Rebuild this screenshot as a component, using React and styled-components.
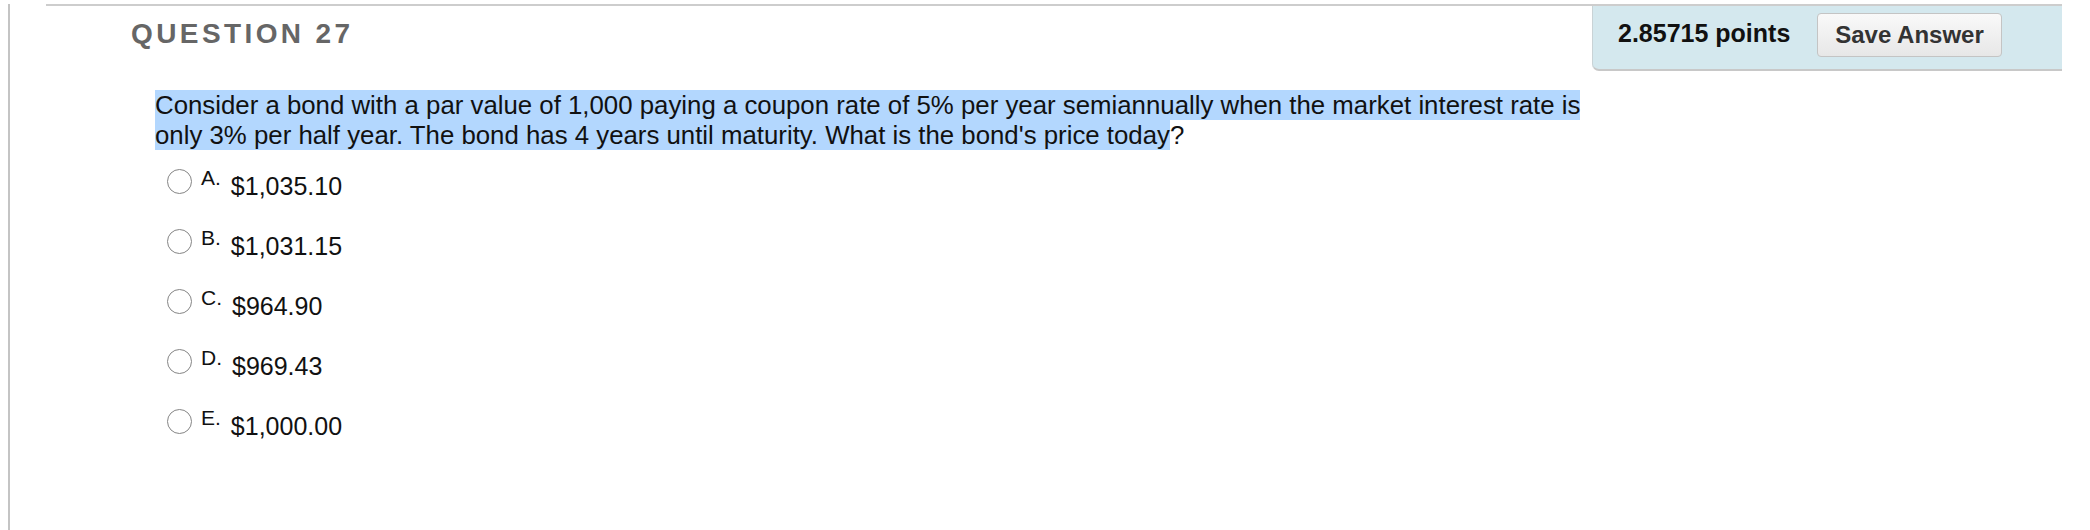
import React from "react";
import styled, { createGlobalStyle } from "styled-components";

const Global = createGlobalStyle`
  html, body { margin: 0; padding: 0; background: #ffffff; }
  body { font-family: "Liberation Sans", Helvetica, Arial, sans-serif; color: #111; }
`;

const Page = styled.div`
  margin-left: 8px;
  min-height: 530px;
  border-left: 2px solid #c4c4c4;
  padding-left: 36px;
  box-sizing: border-box;
`;

const Question = styled.section`
  margin-top: 4px;
  width: 2016px;
  border-top: 2px solid #cdcdcd;
`;

const Header = styled.div`
  display: flex;
  justify-content: space-between;
  align-items: flex-start;
`;

const Title = styled.h2`
  margin: 14px 0 0 85px;
  font-size: 28px;
  line-height: 28px;
  font-weight: 700;
  letter-spacing: 3.4px;
  color: #666666;
`;

const PointsBox = styled.div`
  width: 470px;
  height: 65px;
  box-sizing: border-box;
  display: flex;
  justify-content: space-between;
  align-items: flex-start;
  padding: 0 60px 0 25px;
  background: #d4e8ee;
  border-left: 1px solid #c9d3d6;
  border-bottom: 2px solid #c8c8c8;
  border-bottom-left-radius: 7px;
`;

const Points = styled.span`
  margin-top: 12px;
  font-size: 25px;
  line-height: 30px;
  font-weight: 700;
  color: #111;
`;

const SaveButton = styled.button`
  margin-top: 7px;
  width: 185px;
  height: 44px;
  box-sizing: border-box;
  padding: 0;
  border: 1px solid #c4c4c4;
  border-radius: 4px;
  background: linear-gradient(#f9f9f9, #e7e7e7);
  font-family: "Liberation Sans", Helvetica, Arial, sans-serif;
  font-size: 24px;
  line-height: 42px;
  font-weight: 700;
  color: #333;
`;

const Prompt = styled.p`
  margin: 19px 0 0 109px;
  width: 1462px;
  font-size: 25.8px;
  line-height: 30px;
  color: #111;
`;

const Selected = styled.span`
  background: #b3d7fe;
  padding: 0.6px 0;
`;

const Options = styled.ul`
  list-style: none;
  margin: 15px 0 0 121px;
  padding: 0;
`;

const Option = styled.li`
  display: flex;
  align-items: flex-start;
  height: 60px;
`;

const Radio = styled.input.attrs({ type: "radio" })`
  appearance: none;
  -webkit-appearance: none;
  margin: 4px 9px 0 0;
  width: 25px;
  height: 25px;
  box-sizing: border-box;
  border: 1.8px solid #858585;
  border-radius: 50%;
  background: #fff;
`;

const Letter = styled.span`
  margin-top: 2px;
  font-size: 21px;
  line-height: 21px;
  color: #111;
`;

const Value = styled.span`
  margin: 9px 0 0 10px;
  font-size: 25px;
  line-height: 25px;
  color: #111;
`;

const answers = [
  ["A.", "$1,035.10"],
  ["B.", "$1,031.15"],
  ["C.", "$964.90"],
  ["D.", "$969.43"],
  ["E.", "$1,000.00"],
];

export default function App() {
  return (
    <>
      <Global />
      <Page>
        <Question>
          <Header>
            <Title>QUESTION 27</Title>
            <PointsBox>
              <Points>2.85715 points</Points>
              <SaveButton>Save Answer</SaveButton>
            </PointsBox>
          </Header>
          <Prompt>
            <Selected>
              Consider a bond with a par value of 1,000 paying a coupon rate of 5% per year semiannually when the market interest rate is only 3% per half year. The bond has 4 years until maturity. What is the bond's price today
            </Selected>
            ?
          </Prompt>
          <Options>
            {answers.map(([l, v]) => (
              <Option key={l}>
                <Radio name="q27" />
                <Letter>{l}</Letter>
                <Value>{v}</Value>
              </Option>
            ))}
          </Options>
        </Question>
      </Page>
    </>
  );
}
